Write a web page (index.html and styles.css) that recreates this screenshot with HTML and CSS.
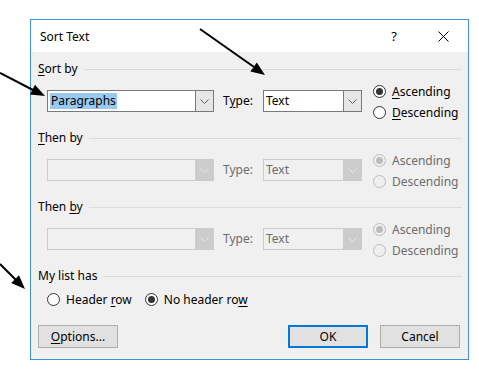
FILE: index.html
```html
<!DOCTYPE html>
<html lang="en">
<head>
  <meta charset="UTF-8">
  <title>Sort Text</title>
  <link rel="stylesheet" href="styles.css">
</head>
<body>
  <div class="dialog">
    <div class="titlebar">
      <span class="title">Sort Text</span>
      <span class="help">?</span>
      <span class="close">
        <svg width="11" height="11" viewBox="0 0 11 11"><path d="M0.5 0.5L10.5 10.5M10.5 0.5L0.5 10.5" stroke="#000" stroke-width="1"/></svg>
      </span>
    </div>

    <div class="dialog-body">
      <!-- Sort by -->
      <div class="group">
        <div class="group-head"><span><u>S</u>ort by</span></div>
        <div class="group-row">
          <div class="combo combo-main">
            <span class="combo-value"><span class="sel">Paragraphs</span></span>
            <span class="combo-btn"><svg width="9" height="5" viewBox="0 0 9 5"><path d="M0.5 0.5L4.5 4.5L8.5 0.5" fill="none" stroke="#606060"/></svg></span>
          </div>
          <span class="type-label">T<u>y</u>pe:</span>
          <div class="combo combo-type">
            <span class="combo-value">Text</span>
            <span class="combo-btn"><svg width="9" height="5" viewBox="0 0 9 5"><path d="M0.5 0.5L4.5 4.5L8.5 0.5" fill="none" stroke="#606060"/></svg></span>
          </div>
          <div class="radios">
            <div class="radio checked"><span class="dot"></span><span><u>A</u>scending</span></div>
            <div class="radio"><span class="dot"></span><span><u>D</u>escending</span></div>
          </div>
        </div>
      </div>

      <!-- Then by -->
      <div class="group disabled">
        <div class="group-head"><span><u>T</u>hen by</span></div>
        <div class="group-row">
          <div class="combo combo-main">
            <span class="combo-value"></span>
            <span class="combo-btn"><svg width="9" height="5" viewBox="0 0 9 5"><path d="M0.5 0.5L4.5 4.5L8.5 0.5" fill="none" stroke="#e6e6e6"/></svg></span>
          </div>
          <span class="type-label">Type:</span>
          <div class="combo combo-type">
            <span class="combo-value">Text</span>
            <span class="combo-btn"><svg width="9" height="5" viewBox="0 0 9 5"><path d="M0.5 0.5L4.5 4.5L8.5 0.5" fill="none" stroke="#e6e6e6"/></svg></span>
          </div>
          <div class="radios">
            <div class="radio checked"><span class="dot"></span><span>Ascending</span></div>
            <div class="radio"><span class="dot"></span><span>Descending</span></div>
          </div>
        </div>
      </div>

      <!-- Then by -->
      <div class="group disabled">
        <div class="group-head"><span>Then <u>b</u>y</span></div>
        <div class="group-row">
          <div class="combo combo-main">
            <span class="combo-value"></span>
            <span class="combo-btn"><svg width="9" height="5" viewBox="0 0 9 5"><path d="M0.5 0.5L4.5 4.5L8.5 0.5" fill="none" stroke="#e6e6e6"/></svg></span>
          </div>
          <span class="type-label">Type:</span>
          <div class="combo combo-type">
            <span class="combo-value">Text</span>
            <span class="combo-btn"><svg width="9" height="5" viewBox="0 0 9 5"><path d="M0.5 0.5L4.5 4.5L8.5 0.5" fill="none" stroke="#e6e6e6"/></svg></span>
          </div>
          <div class="radios">
            <div class="radio checked"><span class="dot"></span><span>Ascending</span></div>
            <div class="radio"><span class="dot"></span><span>Descending</span></div>
          </div>
        </div>
      </div>

      <!-- My list has -->
      <div class="list-group">
        <div class="group-head"><span>My list has</span></div>
        <div class="list-row">
          <div class="radio"><span class="dot"></span><span>Header <u>r</u>ow</span></div>
          <div class="radio checked"><span class="dot"></span><span>No header ro<u>w</u></span></div>
        </div>
      </div>

      <div class="buttons">
        <button class="btn"><u>O</u>ptions...</button>
        <div class="buttons-right">
          <button class="btn btn-default">OK</button>
          <button class="btn">Cancel</button>
        </div>
      </div>
    </div>
  </div>

  <!-- annotation arrows -->
  <svg class="arrows" width="479" height="376" viewBox="0 0 479 376">
    <line x1="0" y1="73" x2="33" y2="90" stroke="#000" stroke-width="2"/>
    <polygon points="45,96 30,94.5 35,84.7" fill="#000"/>
    <line x1="200" y1="29" x2="254" y2="67" stroke="#000" stroke-width="2"/>
    <polygon points="265,75 250.4,71.4 256.8,62.4" fill="#000"/>
    <line x1="0" y1="264" x2="16" y2="280" stroke="#000" stroke-width="2"/>
    <polygon points="25,289 11.2,283 19,275.2" fill="#000"/>
  </svg>
</body>
</html>
```

FILE: styles.css
```css
* {
  margin: 0;
  padding: 0;
  box-sizing: border-box;
}
body {
  background: #fff;
  font-family: "Noto Sans", "Open Sans", sans-serif;
  font-size: 12px;
  color: #000;
  position: relative;
  width: 479px;
  height: 376px;
  overflow: hidden;
}
u {
  text-underline-offset: 2px;
}
.dialog {
  margin: 19px 0 0 30px;
  width: 439px;
  height: 341px;
  border: 1px solid #3f91dd;
  background: #f0f0f0;
}
.titlebar {
  height: 32px;
  background: #fff;
  display: flex;
  align-items: center;
}
.title {
  flex: 1;
  padding-left: 9px;
  font-size: 12px;
}
.help {
  width: 46px;
  text-align: center;
  margin-right: 3px;
  font-size: 13px;
}
.close {
  width: 46px;
  margin-right: 2px;
  display: flex;
  justify-content: center;
}
.dialog-body {
  padding: 9px 6px 0 7px;
}
.group {
  height: 69px;
}
.group-head {
  height: 16px;
  display: flex;
  align-items: center;
  gap: 6px;
  line-height: 16px;
}
.group-head::after {
  content: "";
  flex: 1;
  height: 1px;
  background: #dcdcdc;
}
.group-row {
  display: flex;
  align-items: flex-start;
  margin-top: 13px;
  padding-left: 9px;
}
/* combo boxes */
.combo {
  height: 22px;
  display: flex;
  border: 1px solid #7a7a7a;
  background: #fff;
}
.combo-main {
  width: 167px;
}
.combo-type {
  width: 99px;
}
.combo-value {
  flex: 1;
  padding-left: 2px;
  line-height: 20px;
  display: flex;
  align-items: center;
}
.sel {
  background: #99c9ef;
  padding: 0 1px;
  line-height: 16px;
}
.combo-btn {
  width: 18px;
  border-left: 1px solid #7a7a7a;
  background: #e6e6e6;
  display: flex;
  align-items: center;
  justify-content: center;
}
.type-label {
  width: 40px;
  margin-left: 9px;
  line-height: 22px;
}
/* radio buttons */
.radios {
  margin-left: 11px;
  margin-top: -9px;
}
.radio {
  height: 21px;
  display: flex;
  align-items: center;
  gap: 6px;
}
.dot {
  width: 13px;
  height: 13px;
  border: 1px solid #333;
  border-radius: 50%;
  background: #fff;
  display: flex;
  align-items: center;
  justify-content: center;
}
.radio.checked .dot::after {
  content: "";
  width: 7px;
  height: 7px;
  border-radius: 50%;
  background: #333;
}
/* disabled groups */
.disabled .group-row {
  color: #6d6d6d;
}
.disabled .combo {
  border-color: #cccccc;
  background: #f0f0f0;
}
.disabled .combo-btn {
  border-left-color: #cccccc;
  background: #cccccc;
}
.disabled .dot {
  border-color: #bcbcbc;
  background: #f0f0f0;
}
.disabled .radio.checked .dot::after {
  background: #bcbcbc;
}
/* my list has */
.list-row {
  display: flex;
  align-items: center;
  gap: 13px;
  height: 20px;
  margin-top: 5px;
  padding-left: 9px;
}
/* dialog buttons */
.buttons {
  display: flex;
  justify-content: space-between;
  margin-top: 16px;
  padding-right: 2px;
}
.buttons-right {
  display: flex;
  gap: 12px;
}
.btn {
  width: 80px;
  height: 23px;
  font-family: inherit;
  font-size: 12px;
  color: #000;
  background: #e1e1e1;
  border: 1px solid #adadad;
}
.btn-default {
  border: 2px solid #0078d7;
}
.arrows {
  position: absolute;
  left: 0;
  top: 0;
  pointer-events: none;
}
```
